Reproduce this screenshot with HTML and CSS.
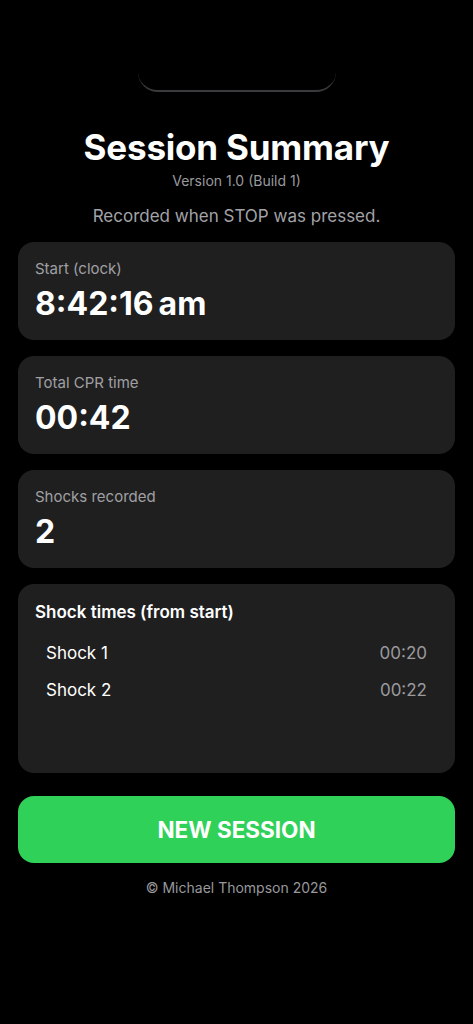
FILE: index.html
```html
<!DOCTYPE html>
<html lang="en">
<head>
  <meta charset="UTF-8">
  <meta name="viewport" content="width=device-width, initial-scale=1.0">
  <title>Session Summary</title>
  <link rel="stylesheet" href="styles.css">
</head>
<body>
  <div class="screen">
    <!-- Sheet edge at the top -->
    <div class="notch"></div>

    <div class="header">
      <h1 class="title">Session Summary</h1>
      <div class="version">Version 1.0 (Build 1)</div>
      <div class="note">Recorded when STOP was pressed.</div>
    </div>

    <div class="card">
      <div class="label">Start (clock)</div>
      <div class="value">8:42:16<span class="ampm">am</span></div>
    </div>

    <div class="card">
      <div class="label">Total CPR time</div>
      <div class="value">00:42</div>
    </div>

    <div class="card">
      <div class="label">Shocks recorded</div>
      <div class="value">2</div>
    </div>

    <div class="card shocks">
      <div class="shocks-title">Shock times (from start)</div>
      <div class="row">
        <span>Shock 1</span>
        <span class="time">00:20</span>
      </div>
      <div class="row">
        <span>Shock 2</span>
        <span class="time">00:22</span>
      </div>
    </div>

    <button class="new-session">NEW SESSION</button>

    <div class="footer">© Michael Thompson 2026</div>
  </div>
</body>
</html>
```

FILE: styles.css
```css
/* General */
body {
  margin: 0;
  background: #000;
  color: #fff;
  font-family: 'Inter', 'Roboto', sans-serif;
}

.screen {
  display: flex;
  flex-direction: column;
  padding: 0 18px;
}

/* Top sheet edge */
.notch {
  align-self: center;
  width: 198px;
  height: 30px;
  margin-top: 60px;
  border-bottom: 2px solid #3a3a3c;
  border-radius: 0 0 20px 20px;
}

/* Header */
.header {
  display: flex;
  flex-direction: column;
  align-items: center;
}

.title {
  margin: 35px 0 0;
  font-size: 35px;
  line-height: 40px;
  font-weight: 700;
  letter-spacing: -0.2px;
}

.version {
  margin-top: 5px;
  font-size: 14px;
  line-height: 18px;
  color: #9a9a9e;
}

.note {
  margin-top: 15px;
  font-size: 17px;
  line-height: 22px;
  color: #a3a3a8;
}

/* Cards */
.card {
  background: #1f1f1f;
  border-radius: 16px;
  padding: 17px 17px 17px;
  margin-top: 16px;
}

.header + .card {
  margin-top: 15px;
}

.label {
  font-size: 15px;
  line-height: 20px;
  color: #a0a0a4;
}

.value {
  margin-top: 6px;
  font-size: 32px;
  line-height: 38px;
  font-weight: 700;
}

.ampm {
  margin-left: 5px;
}

/* Shock list */
.shocks {
  height: 189px;
  box-sizing: border-box;
}

.shocks-title {
  font-size: 17px;
  line-height: 22px;
  font-weight: 600;
}

.row {
  display: flex;
  justify-content: space-between;
  padding: 0 11px;
  font-size: 17px;
  line-height: 22px;
  margin-top: 15px;
}

.shocks-title + .row {
  margin-top: 19px;
}

.row .time {
  color: #9a9a9e;
}

/* Button */
.new-session {
  margin-top: 23px;
  height: 67px;
  border: none;
  border-radius: 16px;
  background: #30d158;
  color: #fff;
  font-family: inherit;
  font-size: 22.5px;
  font-weight: 700;
  cursor: pointer;
}

.footer {
  margin-top: 16px;
  text-align: center;
  font-size: 14px;
  line-height: 18px;
  color: #98989d;
}
```
